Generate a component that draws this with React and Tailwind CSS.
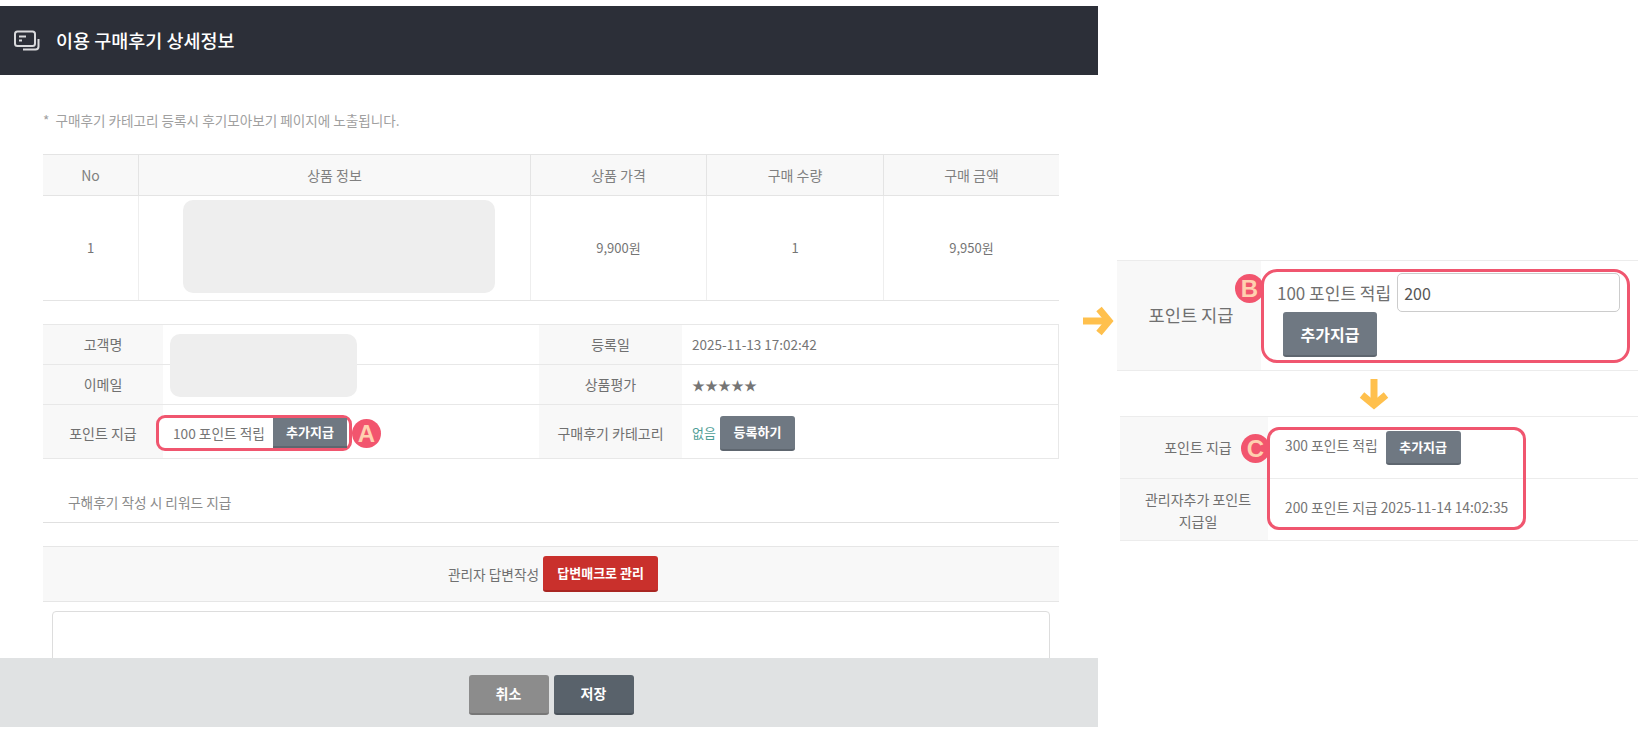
import React from 'react';

const font = { fontFamily: '"Noto Sans CJK KR", "Noto Sans", sans-serif' };

const Badge = ({ letter, className }) => (
    <span className={`absolute w-[29px] h-[29px] rounded-full bg-[#f2556e] text-[#ffd0b0] text-[24px] font-bold leading-[29px] text-center ${className}`} style={{ fontFamily: '"Liberation Sans", sans-serif' }}>
        {letter}
    </span>
);

const GrayButton = ({ children, className = '' }) => (
    <button className={`rounded-[3px] bg-[#6f7882] border-b-2 border-[#5e666f] text-white font-bold ${className}`}>{children}</button>
);

const ArrowRight = () => (
    <svg width="32" height="32" viewBox="0 0 32 32" fill="none" stroke="#ffc04d" strokeWidth="7" strokeLinejoin="miter">
        <path d="M1 16H26" />
        <path d="M17 4L27 16L17 28" />
    </svg>
);

const ArrowDown = () => (
    <svg width="32" height="32" viewBox="0 0 32 32" fill="none" stroke="#ffc04d" strokeWidth="7" strokeLinejoin="miter">
        <path d="M16 1V26" />
        <path d="M4 17L16 27L28 17" />
    </svg>
);

const HeaderIcon = () => (
    <svg width="26" height="22" viewBox="0 0 26 22" fill="none" stroke="#d9dadc" strokeWidth="2">
        <rect x="1" y="1.5" width="20" height="14.5" rx="2.5" />
        <path d="M5 6.5H12M5 10.5H8" />
        <path d="M24.5 9V16.5C24.5 18.5 23.5 19.5 21.5 19.5H9" />
    </svg>
);

const Th = ({ children, className = '' }) => (
    <div className={`flex items-center justify-center bg-[#f8f8f8] text-[14px] text-[#808080] ${className}`}>{children}</div>
);

const Td = ({ children, className = '' }) => (
    <div className={`flex items-center justify-center text-[13px] text-[#757575] border-l border-[#eee] ${className}`}>{children}</div>
);

const Label = ({ children, className = '' }) => (
    <div className={`flex items-center justify-center bg-[#f8f8f8] text-[14px] text-[#707070] ${className}`}>{children}</div>
);

const DetailPanel = () => (
    <div className="w-[1098px] h-[721px] mt-[6px] flex flex-col shrink-0">
        <div className="h-[69px] shrink-0 bg-[#2c2f38] flex items-center pl-[14px] gap-[16px]">
            <HeaderIcon />
            <h1 className="text-[18.5px] font-medium text-white">이용 구매후기 상세정보</h1>
        </div>

        <div className="flex-1 min-h-0 overflow-hidden pl-[43px] pr-[39px]">
            <p className="mt-[35px] h-[20px] leading-[20px] text-[13.6px] text-[#a0a0a0]">*&nbsp; 구매후기 카테고리 등록시 후기모아보기 페이지에 노출됩니다.</p>

            <div className="mt-[24px] grid grid-cols-[95px_392px_176px_177px_176px] grid-rows-[41px_104px] border-y border-[#e4e4e4]">
                <Th className="border-b border-[#e4e4e4]">No</Th>
                <Th className="border-b border-l border-[#e4e4e4]">상품 정보</Th>
                <Th className="border-b border-l border-[#e4e4e4]">상품 가격</Th>
                <Th className="border-b border-l border-[#e4e4e4]">구매 수량</Th>
                <Th className="border-b border-l border-[#e4e4e4]">구매 금액</Th>
                <div className="flex items-center justify-center text-[13px] text-[#757575]">1</div>
                <Td>
                    <div className="ml-[9px] mb-[4px] w-[312px] h-[93px] rounded-[10px] bg-[#eeeeee]" />
                </Td>
                <Td>9,900원</Td>
                <Td>1</Td>
                <Td>9,950원</Td>
            </div>

            <div className="relative mt-[23px] grid grid-cols-[120px_376px_143px_377px] grid-rows-[40px_40px_53px] border-y border-r border-[#e8e8e8] text-[13px] text-[#757575]">
                <Label className="border-b border-[#e8e8e8]">고객명</Label>
                <div className="border-b border-[#e8e8e8]" />
                <Label className="border-b border-[#e8e8e8]">등록일</Label>
                <div className="flex items-center pl-[10px] border-b border-[#e8e8e8] text-[13.5px]">2025-11-13 17:02:42</div>
                <Label className="border-b border-[#e8e8e8]">이메일</Label>
                <div className="border-b border-[#e8e8e8]" />
                <Label className="border-b border-[#e8e8e8]">상품평가</Label>
                <div className="flex items-center pl-[10px] border-b border-[#e8e8e8] text-[13px] text-[#757575]">★★★★★</div>
                <Label className="pt-[3px]">포인트 지급</Label>
                <div className="flex items-center pt-[3px]">
                    <div className="relative -ml-[7px] w-[196px] h-[36px] rounded-[9px] border-[3px] border-[#f0566f] flex items-center pl-[14px] pr-[2px] text-[13.7px] whitespace-nowrap bg-white">
                        <span>100 포인트 적립</span>
                        <GrayButton className="ml-auto w-[74px] h-[30px] text-[13px] rounded-none border-b-0">추가지급</GrayButton>
                        <Badge letter="A" className="-right-[32px] top-[1px]" />
                    </div>
                </div>
                <Label className="pt-[3px] text-[13.7px]">구매후기 카테고리</Label>
                <div className="flex items-center pt-[3px] pl-[10px] gap-[4px]">
                    <span className="text-[#4f9e96] text-[13px]">없음</span>
                    <GrayButton className="w-[75px] h-[35px] text-[13px]">등록하기</GrayButton>
                </div>
                <div className="absolute left-[127px] top-[9px] w-[187px] h-[63px] rounded-[10px] bg-[#eeeeee]" />
            </div>

            <div className="mt-[23px] h-[41px] pl-[25px] pt-[10px] border-b border-[#e0e0e0] text-[13.7px] text-[#8a8a8a] leading-[20px]">구해후기 작성 시 리워드 지급</div>

            <div className="mt-[23px] h-[56px] bg-[#f8f8f8] border-y border-[#e6e6e6] flex items-center justify-center gap-[4px] pl-[4px]">
                <span className="text-[13.7px] text-[#707070]">관리자 답변작성</span>
                <button className="w-[115px] h-[36px] rounded-[3px] bg-[#c9302c] border-b-2 border-[#a92622] text-white text-[13px] font-bold">답변매크로 관리</button>
            </div>

            <textarea className="block mt-[9px] ml-[9px] w-[998px] h-[120px] rounded-[4px] border border-[#ddd] bg-white resize-none" />
        </div>

        <div className="h-[69px] shrink-0 bg-[#e0e2e3] flex items-center justify-center gap-[5px] pl-[4px] pt-[4px]">
            <button className="w-[80px] h-[40px] rounded-[3px] bg-[#8c8c8c] border-b-2 border-[#777] text-white text-[14px] font-bold">취소</button>
            <button className="w-[80px] h-[40px] rounded-[3px] bg-[#59626b] border-b-2 border-[#4a525a] text-white text-[14px] font-bold">저장</button>
        </div>
    </div>
);

const ExamplePanel = () => (
    <div className="flex-1 min-w-0 pt-[260px] relative">
        <div className="absolute left-[-16px] top-[305px]">
            <ArrowRight />
        </div>

        <div className="ml-[19px] mr-[6px] h-[111px] border-y border-[#ececec] flex">
            <Label className="w-[144px] pl-[4px] text-[17.6px]">포인트 지급</Label>
            <div className="relative mt-[8px] w-[369px] h-[94px] rounded-[16px] border-[3px] border-[#f0566f] pl-[13px] bg-white">
                <div className="flex items-center gap-[6px] mt-[1px]">
                    <span className="text-[17px] text-[#707070] whitespace-nowrap">100 포인트 적립</span>
                    <input readOnly value="200" className="w-[223px] h-[39px] rounded-[5px] border border-[#ccc] px-[6px] text-[16px] text-[#555]" />
                </div>
                <GrayButton className="block ml-[6px] w-[94px] h-[45px] text-[16px]">추가지급</GrayButton>
                <Badge letter="B" className="-left-[29px] top-[2px]" />
            </div>
        </div>

        <div className="ml-[260px] mt-[7px] h-[32px] flex">
            <ArrowDown />
        </div>

        <div className="ml-[22px] mr-[6px] mt-[6px] h-[125px] border-y border-[#ececec] grid grid-cols-[148px_1fr] grid-rows-[62px_1fr] relative">
            <Label className="border-b border-[#ececec] pl-[8px] text-[13.7px]">포인트 지급</Label>
            <div className="border-b border-[#ececec]" />
            <Label className="pl-[8px] text-[13.2px] text-center leading-[22px]">관리자추가 포인트<br />지급일</Label>
            <div />
            <div className="absolute left-[147px] top-[10px] w-[259px] h-[103px] rounded-[12px] border-[3px] border-[#f0566f] pl-[15px] text-[13.8px] text-[#757575] flex flex-col">
                <div className="flex items-center gap-[8px] mt-[1px] whitespace-nowrap">
                    <span className="-mt-[6px]">300 포인트 적립</span>
                    <GrayButton className="w-[75px] h-[34px] text-[13px]">추가지급</GrayButton>
                </div>
                <span className="mt-[32px] whitespace-nowrap">200 포인트 지급 2025-11-14 14:02:35</span>
                <Badge letter="C" className="-left-[29px] top-[4px]" />
            </div>
        </div>
    </div>
);

export default function App() {
    return (
        <div className="w-[1644px] h-[729px] bg-white flex overflow-hidden" style={font}>
            <DetailPanel />
            <ExamplePanel />
        </div>
    );
}
